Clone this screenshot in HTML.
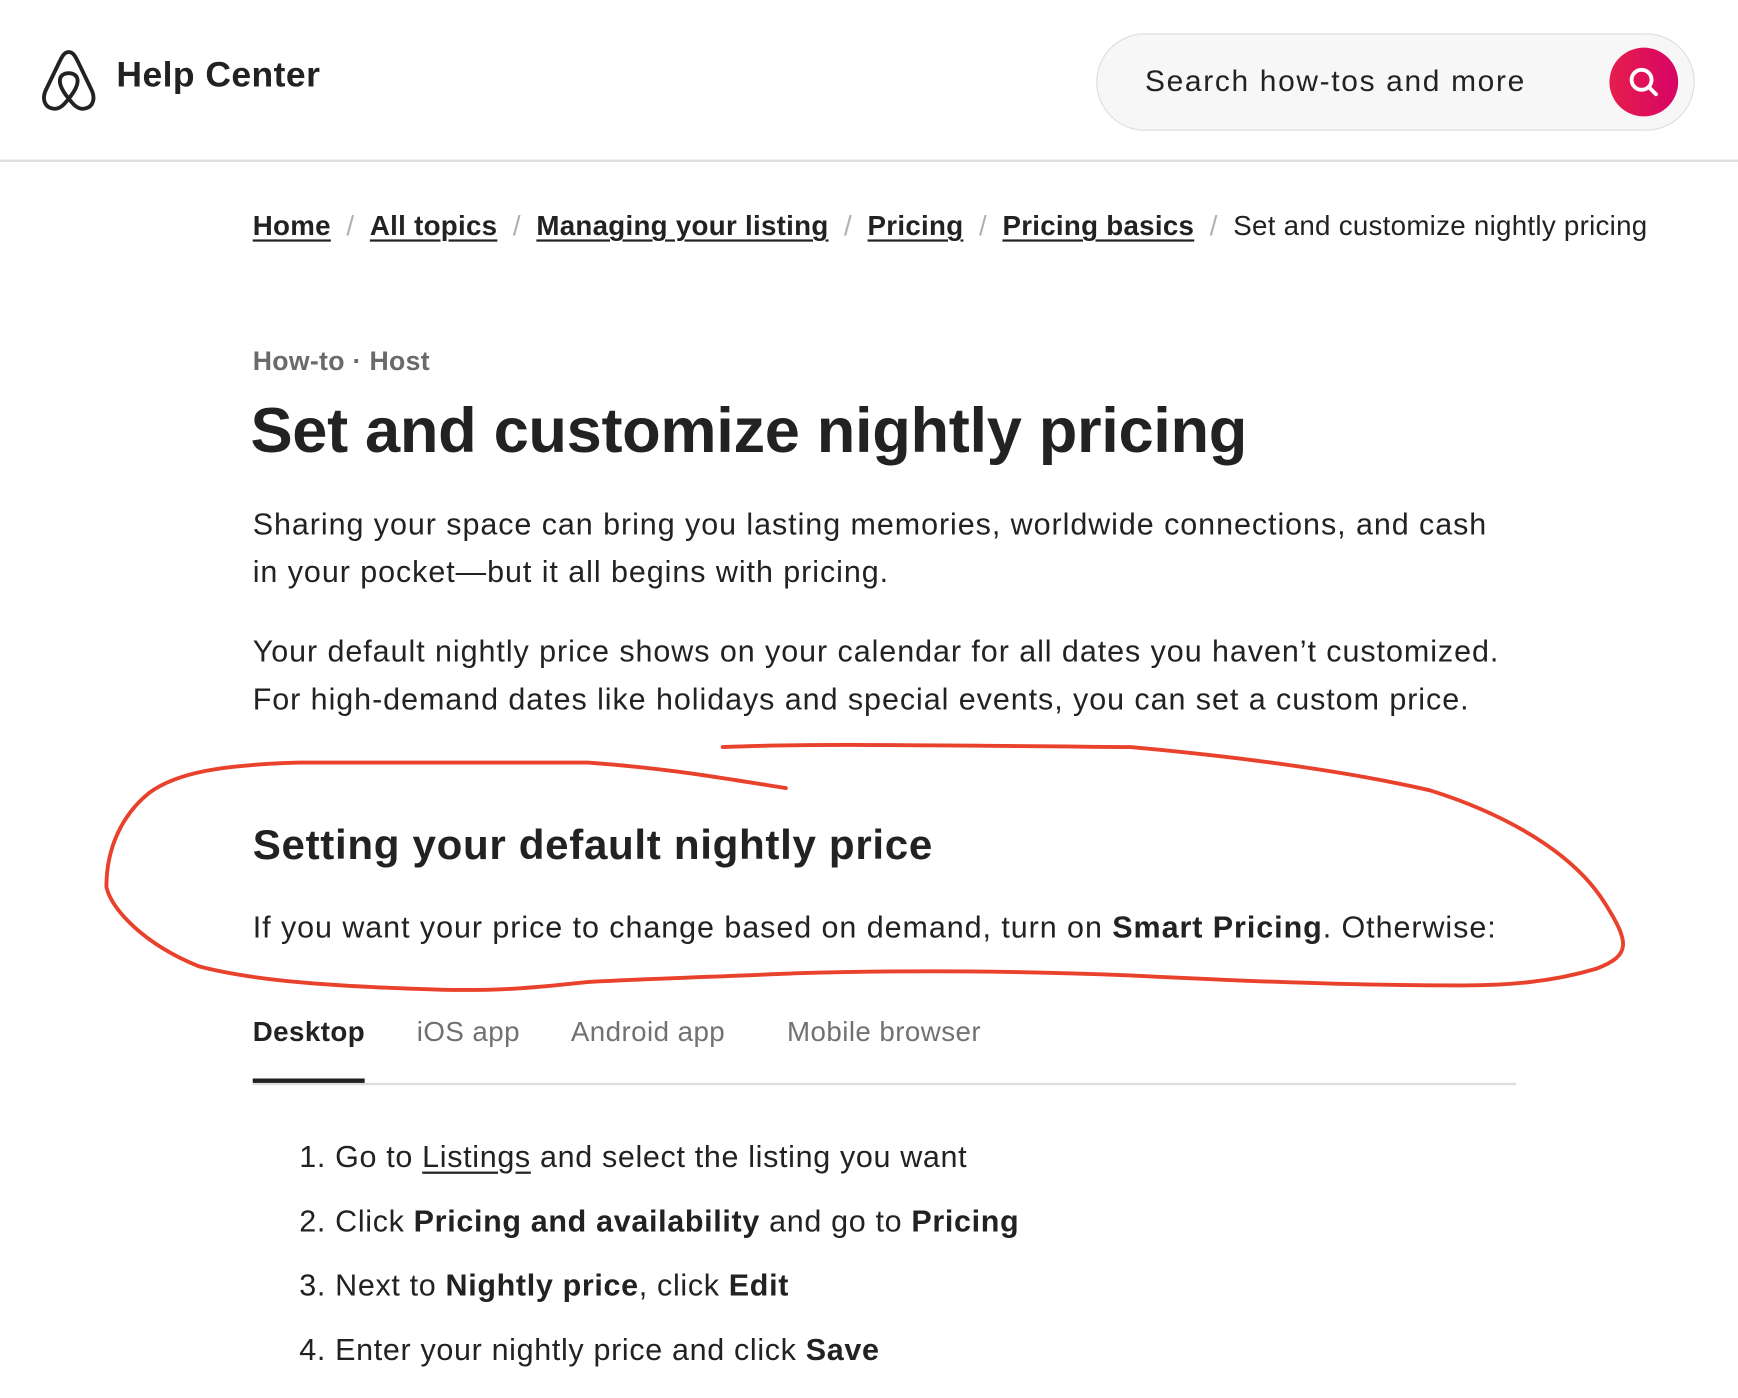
<!DOCTYPE html>
<html><head><meta charset="utf-8">
<style>
html,body{margin:0;padding:0;background:#fff;overflow:hidden}
body{width:1738px;height:1398px;position:relative}
#w{position:absolute;left:0;top:0;width:1568px;height:1261px;transform:scale(1.10842);transform-origin:0 0;font-family:"Liberation Sans",sans-serif;color:#222}
.a{position:absolute;white-space:nowrap}
.bc{font-size:25px;top:190px;left:228px;letter-spacing:0.25px}
.bc u{text-underline-offset:4px;text-decoration-thickness:2px;font-weight:600}
.bc .s{color:#b0b0b0;margin:0 14px}
p{margin:0}
.t{font-size:27.5px;line-height:43px;letter-spacing:0.85px}
b{font-weight:700}
.li{font-size:27.5px;left:270px;letter-spacing:0.6px}
.tab{font-size:25px;top:917px;letter-spacing:0.4px}
</style></head><body><div id="w">
<svg class="a" style="left:36px;top:44px" width="52" height="56" viewBox="0 0 52 56"><path d="M26 3C22 3 20 7 18 11L5 38C2 45 4 53 12 54C18 55 22 50 26 45C30 50 34 55 40 54C48 53 50 45 47 38L34 11C32 7 30 3 26 3ZM26 45C21 39 18 33 18 29C18 24 22 22 26 22C30 22 34 24 34 29C34 33 31 39 26 45Z" fill="none" stroke="#222" stroke-width="3.5" stroke-linejoin="round"/></svg>
<div class="a" style="left:105px;top:49px;font-size:32px;font-weight:700;letter-spacing:0.4px">Help Center</div>
<div class="a" style="left:989px;top:30px;width:538px;height:86px;border:1px solid #ddd;border-radius:44px;background:#f7f7f7"></div>
<div class="a" style="left:1033px;top:58px;font-size:27px;letter-spacing:1.5px">Search how-tos and more</div>
<div class="a" style="left:1452px;top:43px;width:62px;height:62px;border-radius:50%;background:linear-gradient(90deg,#e61e4d,#d70466)"></div>
<svg class="a" style="left:1466px;top:57px" width="34" height="34" viewBox="0 0 34 34"><circle cx="15" cy="15" r="9" fill="none" stroke="#fff" stroke-width="3.5"/><path d="M21.5 21.5L28 28" stroke="#fff" stroke-width="3.5" stroke-linecap="round"/></svg>
<div class="a" style="left:0;top:144px;width:1568px;height:2px;background:#ddd"></div>
<div class="a bc"><u>Home</u><span class="s">/</span><u>All topics</u><span class="s">/</span><u>Managing your listing</u><span class="s">/</span><u>Pricing</u><span class="s">/</span><u>Pricing basics</u><span class="s">/</span>Set and customize nightly pricing</div>
<div class="a" style="left:228px;top:313px;font-size:24px;color:#6a6a6a;font-weight:600;letter-spacing:0.3px">How-to · Host</div>
<div class="a" style="left:226px;top:356px;font-size:57px;font-weight:700;letter-spacing:-0.3px">Set and customize nightly pricing</div>
<p class="a t" style="left:228px;top:451px">Sharing your space can bring you lasting memories, worldwide connections, and cash<br>in your pocket—but it all begins with pricing.</p>
<p class="a t" style="left:228px;top:566px">Your default nightly price shows on your calendar for all dates you haven’t customized.<br>For high-demand dates like holidays and special events, you can set a custom price.</p>
<div class="a" style="left:228px;top:742px;font-size:38px;font-weight:700;letter-spacing:0.6px">Setting your default nightly price</div>
<p class="a t" style="left:228px;top:815px">If you want your price to change based on demand, turn on <b>Smart Pricing</b>. Otherwise:</p>
<div class="a tab" style="left:228px;font-weight:600">Desktop</div>
<div class="a tab" style="left:376px;color:#717171">iOS app</div>
<div class="a tab" style="left:515px;color:#717171">Android app</div>
<div class="a tab" style="left:710px;color:#717171">Mobile browser</div>
<div class="a" style="left:228px;top:977px;width:1140px;height:2px;background:#ddd"></div>
<div class="a" style="left:228px;top:973px;width:101px;height:4px;background:#222"></div>
<div class="a li" style="top:1028px">1. Go to <u style="text-underline-offset:4px">Listings</u> and select the listing you want</div>
<div class="a li" style="top:1086px">2. Click <b>Pricing and availability</b> and go to <b>Pricing</b></div>
<div class="a li" style="top:1144px">3. Next to <b>Nightly price</b>, click <b>Edit</b></div>
<div class="a li" style="top:1202px">4. Enter your nightly price and click <b>Save</b></div>
<svg class="a" style="left:0;top:0" width="1568" height="1261"><path d="M652 674C720 671 800 672 1020 674C1130 684 1220 697 1290 713C1360 735 1420 770 1448 815C1470 850 1472 862 1440 874C1400 886 1360 889 1320 889C1250 889 1180 888 1020 880C920 876 830 875 720 878C650 881 560 884 530 886C490 890 460 894 400 893C300 890 230 885 180 872C130 852 100 820 96 800C96 765 110 735 135 715C160 697 200 690 270 688C350 688 450 688 530 688C600 693 640 700 709 711" fill="none" stroke="#e8412c" stroke-width="3.5" stroke-linecap="round"/></svg>
</div></body></html>
